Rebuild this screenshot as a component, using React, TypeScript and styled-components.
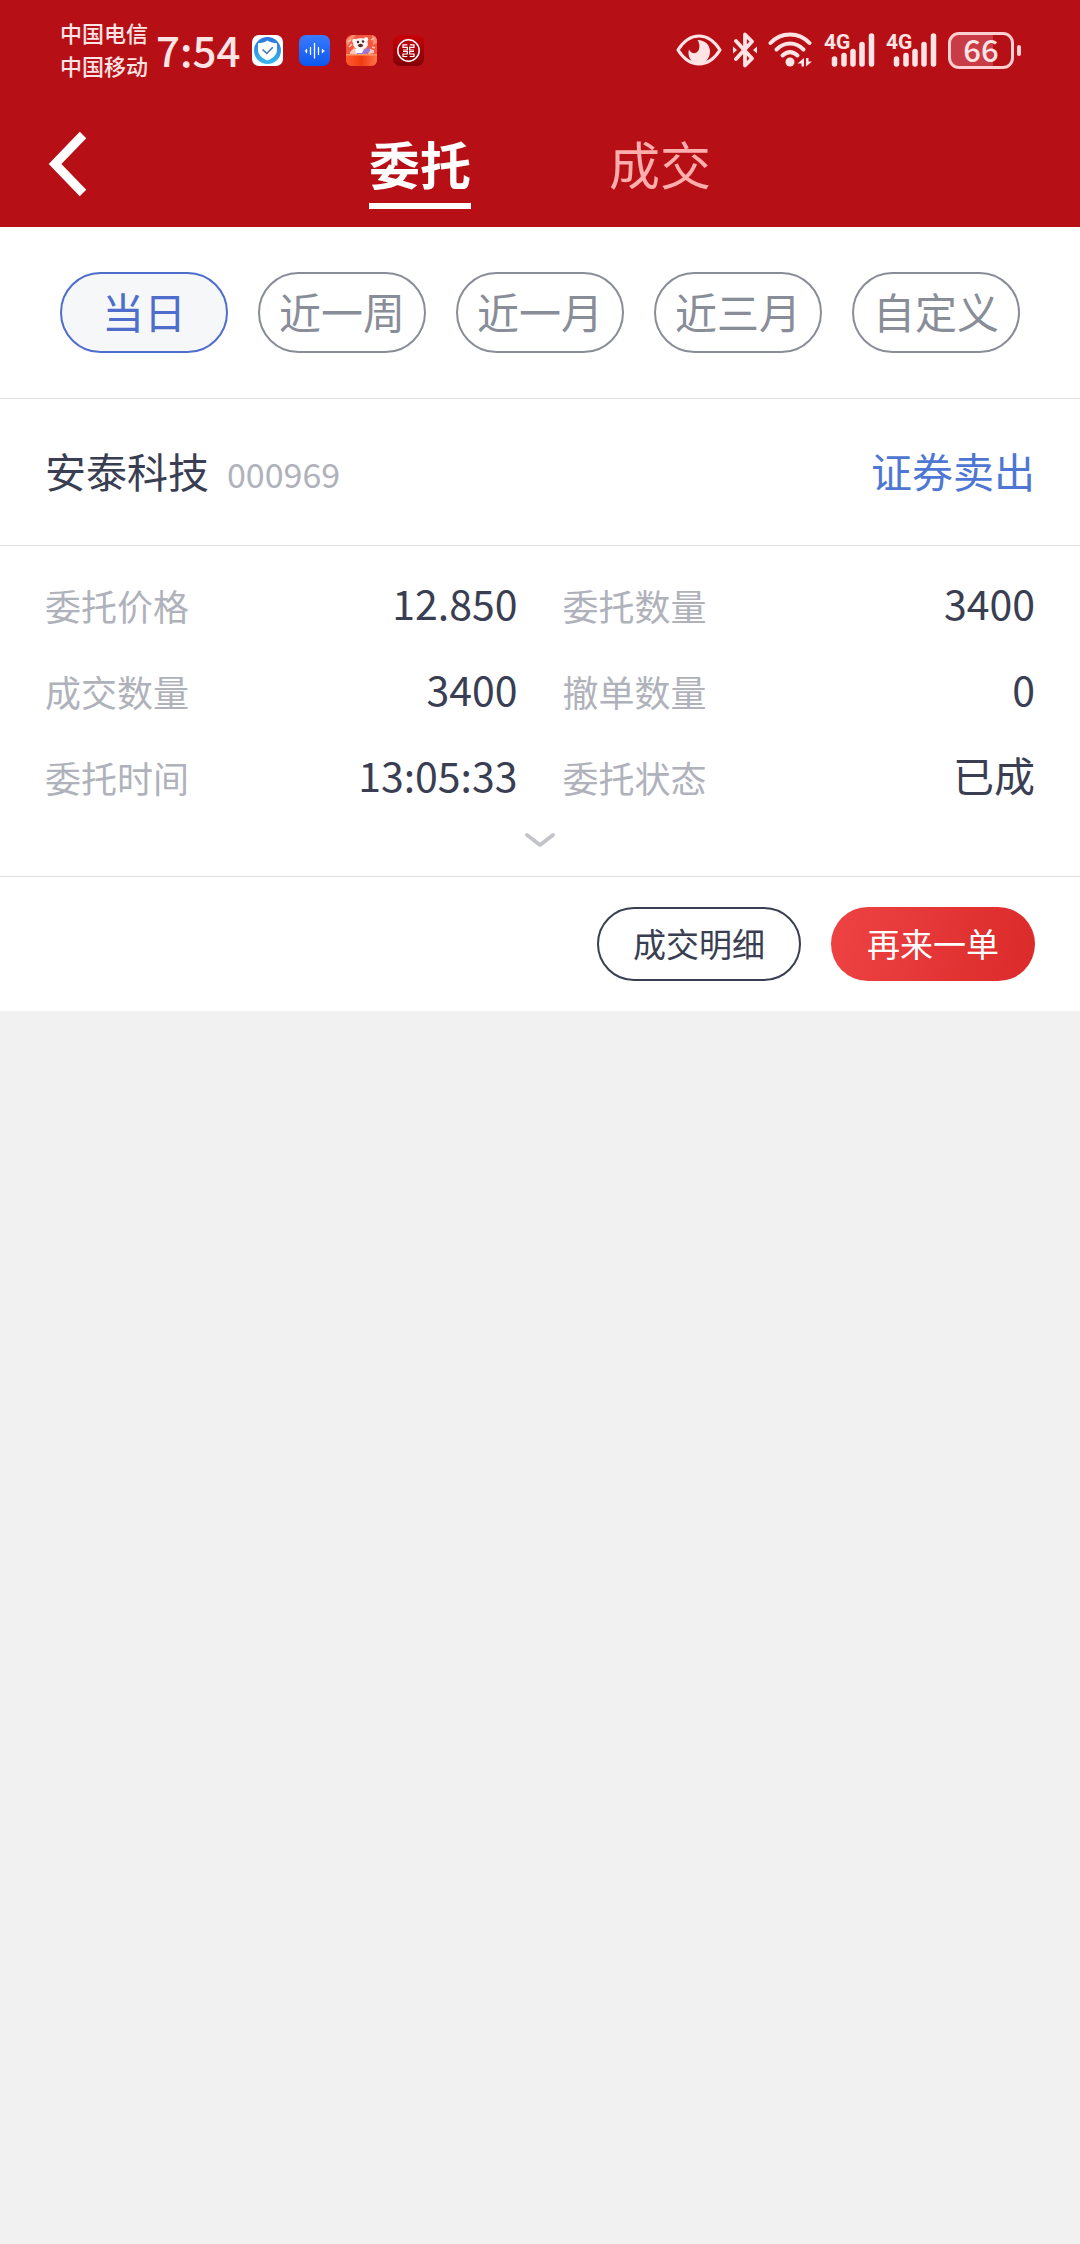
import React, { useState } from "react";
import styled, { createGlobalStyle } from "styled-components";

const GlobalStyle = createGlobalStyle`
  *, *::before, *::after { box-sizing: border-box; }
  body {
    margin: 0;
    background: #f1f1f1;
    color: #393e52;
    font-family: "Noto Sans CJK SC", "Noto Sans", sans-serif;
  }
  button {
    margin: 0;
    padding: 0;
    border: 0;
    background: none;
    color: inherit;
    font: inherit;
    cursor: pointer;
  }
`;

const Header = styled.header`
  background: #b61016;
  color: #fff;
`;

const StatusBar = styled.div`
  display: flex;
  align-items: center;
  justify-content: space-between;
  height: 100px;
  padding: 0 59px 0 60px;
  color: #ffe4e5;
`;

const StatusGroup = styled.div<{ $gap: number }>`
  display: flex;
  align-items: center;
  gap: ${(p) => p.$gap}px;
`;

const Carriers = styled.div`
  display: flex;
  flex-direction: column;
  padding-bottom: 3px;
  font-size: 22px;
  line-height: 33px;
  font-weight: 500;
`;

const Clock = styled.time`
  padding-bottom: 3px;
  font-size: 42px;
  line-height: 60px;
  font-weight: 500;
`;

const AppIcons = styled.div`
  display: flex;
  gap: 16px;
  margin-left: 4px;

  svg { display: block; }
`;

const NavBar = styled.nav`
  display: grid;
  grid-template-columns: 1fr auto 1fr;
  align-items: center;
  height: 127px;
  padding: 0 45px;
`;

const BackButton = styled.button`
  justify-self: start;
  width: 45px;
  height: 72px;

  svg { display: block; }
`;

const Tabs = styled.div`
  display: flex;
  align-self: end;
  gap: 138px;
  padding-bottom: 18px;
`;

const Tab = styled.button<{ $active: boolean }>`
  padding-bottom: 8px;
  border-bottom: 6px solid ${(p) => (p.$active ? "#fff" : "transparent")};
  color: ${(p) => (p.$active ? "#fff" : "#ffadad")};
  font-size: 51px;
  line-height: 64px;
  font-weight: ${(p) => (p.$active ? 700 : 400)};
`;

const Panel = styled.main`
  background: #fff;
`;

const Filters = styled.div`
  display: flex;
  gap: 30px;
  padding: 45px 60px;
  border-bottom: 1px solid #e2e2e4;
`;

const Chip = styled.button<{ $active: boolean }>`
  flex: 1;
  height: 81px;
  padding-bottom: 4px;
  border: 2px solid ${(p) => (p.$active ? "#4f6dcb" : "#898d98")};
  border-radius: 41px;
  background: ${(p) => (p.$active ? "#f6f7f9" : "#fff")};
  color: ${(p) => (p.$active ? "#4f6dcb" : "#898d98")};
  font-size: 42px;
  line-height: 60px;
  white-space: nowrap;
`;

const OrderHead = styled.div`
  display: flex;
  align-items: baseline;
  justify-content: space-between;
  height: 147px;
  padding: 41px 45px 0;
  border-bottom: 1px solid #e2e2e4;
  font-size: 41px;
  line-height: 60px;
`;

const Stock = styled.div`
  display: flex;
  align-items: baseline;
  gap: 18px;
`;

const Code = styled.span`
  color: #b0b2bb;
  font-size: 34px;
`;

const Side = styled.span`
  color: #4e77d3;
`;

const Details = styled.section`
  padding: 16px 45px 0;
  border-bottom: 1px solid #e2e2e4;
`;

const Fields = styled.dl`
  display: grid;
  grid-template-columns: 1fr 1fr;
  column-gap: 45px;
  margin: 0;
`;

const Field = styled.div`
  display: flex;
  align-items: center;
  justify-content: space-between;
  height: 86px;
`;

const Label = styled.dt`
  color: #b0b2bb;
  font-size: 36px;
  line-height: 60px;
`;

const Value = styled.dd`
  margin: 0;
  padding-bottom: 6px;
  font-size: 41px;
  line-height: 60px;
`;

const ExpandButton = styled.button`
  display: flex;
  align-items: center;
  justify-content: center;
  width: 100%;
  height: 56px;
  padding-bottom: 16px;
`;

const Actions = styled.div`
  display: flex;
  justify-content: flex-end;
  gap: 30px;
  padding: 30px 45px;
`;

const Action = styled.button<{ $primary?: boolean }>`
  width: 204px;
  height: 74px;
  padding-bottom: 2px;
  border: ${(p) => (p.$primary ? "0" : "2px solid #393e52")};
  border-radius: 37px;
  background: ${(p) =>
    p.$primary ? "linear-gradient(100deg, #ee4343, #db2a2a)" : "#fff"};
  color: ${(p) => (p.$primary ? "#fff" : "#393e52")};
  font-size: 33px;
  line-height: 48px;
`;

function ShieldAppIcon() {
  return (
    <svg width="31" height="31" viewBox="0 0 31 31" aria-hidden="true">
      <defs>
        <linearGradient id="shieldRing" x1="0" y1="0" x2="0" y2="1">
          <stop offset="0" stopColor="#2f74dc" />
          <stop offset="1" stopColor="#35b8ee" />
        </linearGradient>
      </defs>
      <rect width="31" height="31" rx="7" fill="#fff" />
      <circle cx="15.5" cy="15.5" r="13.5" fill="url(#shieldRing)" />
      <path d="M15.5 5.5c3 2 5.500 2.500 9.500 2.700v6.500c0 5-4 8.500-9.500 10.800C10 23.200 6 19.700 6 14.700V8.200c4-.2 6.500-.7 9.500-2.700z" fill="#fff" />
      <path d="M10.500 14.500l4.300 4 6-6.300" fill="none" stroke="#3b77b8" strokeWidth="1.600" />
    </svg>
  );
}

function VoiceAppIcon() {
  return (
    <svg width="31" height="31" viewBox="0 0 31 31" aria-hidden="true">
      <defs>
        <linearGradient id="voiceBg" x1="0" y1="0" x2="0" y2="1">
          <stop offset="0" stopColor="#3a7bff" />
          <stop offset="1" stopColor="#0b57ee" />
        </linearGradient>
      </defs>
      <rect width="31" height="31" rx="7" fill="url(#voiceBg)" />
      <path d="M7.500 14.500v3M11.500 12.500v7M15.500 8.500v14.500M19.500 12.500v7M23.500 14.500v3" stroke="#fff" strokeWidth="1.300" strokeLinecap="round" />
      <path d="M6.500 16h1M24 16h1" stroke="#fff" strokeWidth="1.300" strokeLinecap="round" />
    </svg>
  );
}

function MascotAppIcon() {
  return (
    <svg width="31" height="31" viewBox="0 0 31 31" aria-hidden="true">
      <defs>
        <linearGradient id="mascotBox" x1="0" y1="0" x2="1" y2="0">
          <stop offset="0" stopColor="#ff5a2b" />
          <stop offset="0.500" stopColor="#f23c12" />
          <stop offset="1" stopColor="#ff7448" />
        </linearGradient>
        <clipPath id="mascotClip"><rect width="31" height="31" rx="6" /></clipPath>
      </defs>
      <g clipPath="url(#mascotClip)">
        <rect width="31" height="31" fill="#f4573f" />
        <path d="M0 5l6-5h4L1 11zM26 0h5v8l-4 2z" fill="#ff8d70" />
        <path d="M3 12l3-3M25 5l3-2M2 7l3-2M26 12l3 1" stroke="#ffc9b5" strokeWidth="1.500" />
        <path d="M4 17l4-4 4 3-1 3H4zM24 14l4 1v3l-6 1z" fill="#f9c7bb" />
        <circle cx="8.500" cy="6" r="2.300" fill="#fff" />
        <circle cx="20" cy="4.500" r="2.300" fill="#fff" />
        <ellipse cx="14.500" cy="9" rx="7.500" ry="6" fill="#fbf1ee" />
        <path d="M10 15c5 1 10 0 13-3l1 4-4 3h-9z" fill="#9a78d8" />
        <path d="M9 14h9l-2 4h-6z" fill="#fff" />
        <circle cx="12" cy="7" r="1.200" fill="#352525" />
        <circle cx="17" cy="6.500" r="1.200" fill="#352525" />
        <ellipse cx="14.500" cy="10.500" rx="2.500" ry="1.800" fill="#5b2b2b" />
        <rect y="19" width="31" height="12" fill="url(#mascotBox)" />
        <rect y="19" width="31" height="1.500" fill="#ff9a66" />
      </g>
    </svg>
  );
}

function BankAppIcon() {
  return (
    <svg width="31" height="31" viewBox="0 0 31 31" aria-hidden="true">
      <defs>
        <linearGradient id="bankBg" x1="0" y1="0" x2="0" y2="1">
          <stop offset="0" stopColor="#c90009" />
          <stop offset="1" stopColor="#820006" />
        </linearGradient>
      </defs>
      <rect width="31" height="31" rx="7" fill="url(#bankBg)" />
      <circle cx="15.500" cy="15.500" r="10.700" fill="none" stroke="#fff" strokeWidth="1.500" />
      <g fill="none" stroke="#fff" strokeWidth="1.200">
        <path d="M14.300 9.800H10v2.600h4.300V15H10M10 16.500h4.300V19H10v2.500h4.300" />
        <path d="M16.700 9.800H21v2.600h-4.300V15H21M21 16.500h-4.300V19H21v2.500h-4.300" />
      </g>
    </svg>
  );
}

function EyeIcon() {
  return (
    <svg width="46" height="32" viewBox="0 0 46 32" aria-hidden="true">
      <path d="M2 16C8 6.500 15 2 23 2s15 4.500 21 14c-6 9.500-13 14-21 14S8 25.500 2 16z" fill="none" stroke="currentColor" strokeWidth="3.200" strokeLinejoin="round" />
      <path d="M21.500 6C29 6 34 11 34 17.500S29 30 23 30s-10.500-5-10.500-11c0-1.500.2-2.500.5-3.500 1.500 3.500 5 4.500 7.500 3 3.500-2.500 4-7.500 1-12.500z" fill="currentColor" />
    </svg>
  );
}

function BluetoothIcon() {
  return (
    <svg width="24" height="36" viewBox="0 0 24 36" aria-hidden="true">
      <path d="M3 9l16 17.500-7 7V2.500l7 7L3 27" fill="none" stroke="currentColor" strokeWidth="3.800" strokeLinejoin="round" strokeLinecap="round" />
      <path d="M0 14.500l4 3.500-4 3.500zM24 14.500l-4 3.500 4 3.500z" fill="currentColor" />
    </svg>
  );
}

function WifiIcon() {
  return (
    <svg width="45" height="36" viewBox="0 0 45 36" aria-hidden="true">
      <g fill="none" stroke="currentColor" strokeWidth="4" strokeLinecap="round">
        <path d="M2.500 11C13-.5 31-.5 41.500 11" />
        <path d="M8.500 17.500c8-8 19-8 27 0" />
        <path d="M14.500 23.500c5-4.500 10-4.500 15 0" />
      </g>
      <circle cx="22" cy="30" r="4.500" fill="currentColor" />
      <path d="M36 26v8.500h-2.500v-3h-4zM38 34.500V26h2.500v3.500H44z" fill="currentColor" />
    </svg>
  );
}

const SignalText = styled.text`
  font-family: Roboto, "Noto Sans", sans-serif;
  font-size: 21px;
  font-weight: 700;
`;

function SignalIcon() {
  return (
    <svg width="51" height="56" viewBox="0 -10 51 56" role="img" aria-label="4G">
      <SignalText x="0" y="17" fill="currentColor">4G</SignalText>
      <g stroke="currentColor" strokeWidth="5.500" strokeLinecap="round">
        <path d="M10.500 27v5M20 23.500v8.500M29 19.500V32M38 12.500V32M47.500 4v28" />
      </g>
    </svg>
  );
}

const Battery = styled.div`
  display: flex;
  align-items: center;
  gap: 3px;

  &::after {
    content: "";
    width: 4px;
    height: 11px;
    border-radius: 2px;
    background: #ffd0d2;
  }
`;

const BatteryBody = styled.div`
  width: 66px;
  height: 37px;
  border: 3px solid #ffcfd1;
  border-radius: 11px;
  background: linear-gradient(90deg, #c93c45 70%, #b61016 70%);
  font-size: 31px;
  line-height: 28px;
  font-weight: 500;
  text-align: center;
`;

const periods = ["当日", "近一周", "近一月", "近三月", "自定义"];

const fields = [
  ["委托价格", "12.850"],
  ["委托数量", "3400"],
  ["成交数量", "3400"],
  ["撤单数量", "0"],
  ["委托时间", "13:05:33"],
  ["委托状态", "已成"],
];

export default function App() {
  const [tab, setTab] = useState("委托");
  const [period, setPeriod] = useState("当日");

  return (
    <>
      <GlobalStyle />
      <Header>
        <StatusBar>
          <StatusGroup $gap={8}>
            <Carriers>
              <span>中国电信</span>
              <span>中国移动</span>
            </Carriers>
            <Clock>7:54</Clock>
            <AppIcons>
              <ShieldAppIcon />
              <VoiceAppIcon />
              <MascotAppIcon />
              <BankAppIcon />
            </AppIcons>
          </StatusGroup>
          <StatusGroup $gap={11}>
            <EyeIcon />
            <BluetoothIcon />
            <WifiIcon />
            <SignalIcon />
            <SignalIcon />
            <Battery>
              <BatteryBody>66</BatteryBody>
            </Battery>
          </StatusGroup>
        </StatusBar>
        <NavBar>
          <BackButton type="button" aria-label="返回">
            <svg width="45" height="72" viewBox="0 0 45 72">
              <path d="M38 7L10 36l28 29" fill="none" stroke="#fff" strokeWidth="9" />
            </svg>
          </BackButton>
          <Tabs role="tablist">
            {["委托", "成交"].map((name) => (
              <Tab
                key={name}
                type="button"
                role="tab"
                aria-selected={tab === name}
                $active={tab === name}
                onClick={() => setTab(name)}
              >
                {name}
              </Tab>
            ))}
          </Tabs>
        </NavBar>
      </Header>
      <Panel>
        <Filters>
          {periods.map((name) => (
            <Chip
              key={name}
              type="button"
              aria-pressed={period === name}
              $active={period === name}
              onClick={() => setPeriod(name)}
            >
              {name}
            </Chip>
          ))}
        </Filters>
        <OrderHead>
          <Stock>
            <span>安泰科技</span>
            <Code>000969</Code>
          </Stock>
          <Side>证券卖出</Side>
        </OrderHead>
        <Details>
          <Fields>
            {fields.map(([label, value]) => (
              <Field key={label}>
                <Label>{label}</Label>
                <Value>{value}</Value>
              </Field>
            ))}
          </Fields>
          <ExpandButton type="button" aria-label="展开">
            <svg width="32" height="18" viewBox="0 0 32 18">
              <path d="M3 4l13 10L29 4" fill="none" stroke="#c4c5cb" strokeWidth="4" strokeLinecap="round" strokeLinejoin="round" />
            </svg>
          </ExpandButton>
        </Details>
        <Actions>
          <Action type="button">成交明细</Action>
          <Action type="button" $primary>再来一单</Action>
        </Actions>
      </Panel>
    </>
  );
}
